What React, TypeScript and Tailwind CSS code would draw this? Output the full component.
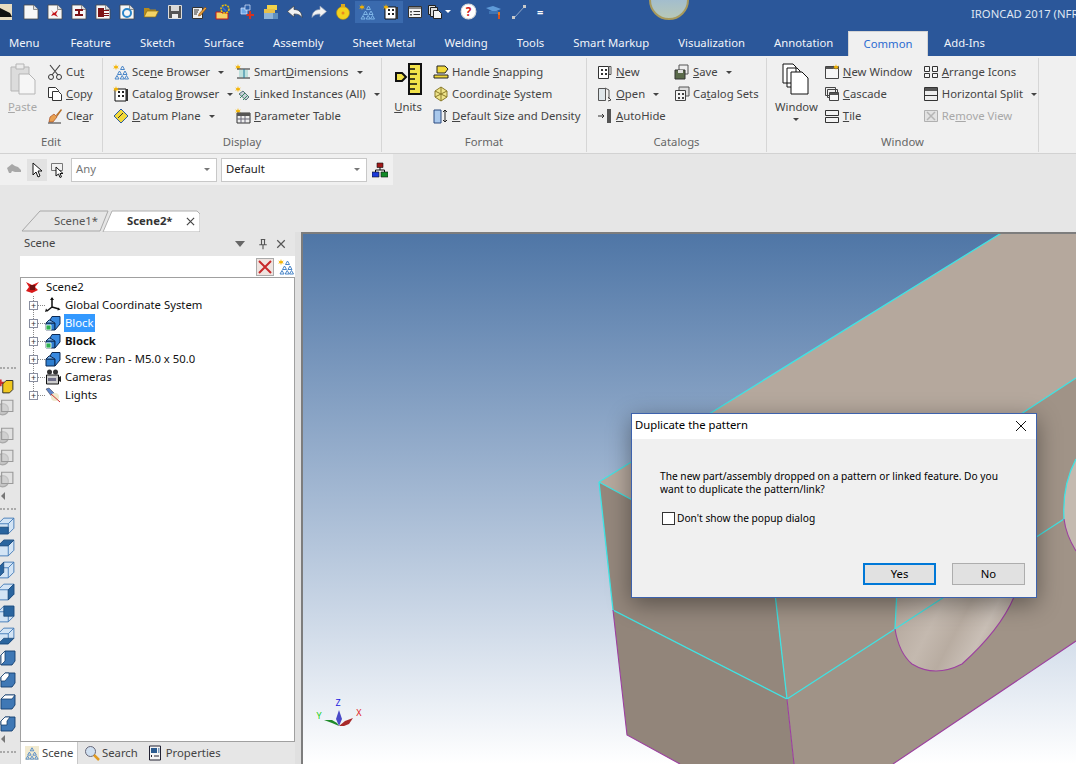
import type { ReactNode } from "react";

const Svg = ({ children, className = "w-4 h-4" }: { children: ReactNode; className?: string }) => (
    <svg viewBox="0 0 16 16" className={`${className} shrink-0 block`}>
        {children}
    </svg>
);

const Star = ({ x = 3, y = 3 }: { x?: number; y?: number }) => (
    <path
        d={`M${x} ${y - 3}l.7 2.2 2.2-.8-1.4 1.7 1.4 1.6-2.2-.7-.7 2.2-.7-2.2-2.2.7 1.4-1.6-1.4-1.7 2.2.8z`}
        fill="#f5b400"
    />
);

const Page = ({ mark }: { mark?: ReactNode }) => (
    <Svg>
        <path d="M1 1h9.500L15 5.500V15H1z" fill="#f7f7f7" stroke="#4a4a4a" strokeWidth=".8" />
        <path d="M10.500 1v4.500H15" fill="#ddd" stroke="#777" strokeWidth=".8" />
        {mark}
    </Svg>
);

const TreeIcon = ({ blue = "#4a86c8" }: { blue?: string }) => (
    <Svg>
        <Star />
        <path d="M9.500 2l2 3.500h-4zM6.500 7l2 3.500h-4zM12 7l2 3.500h-4zM4 11.500l2 3.500H2zM9.200 11.500l2 3.500h-4zM13.500 11.500l2 3.500h-4z" fill="none" stroke={blue} strokeWidth="1" />
    </Svg>
);

const CatalogIcon = () => (
    <Svg>
        <path d="M2 3h11v12H2z" fill="#fff" stroke="#111" />
        <path d="M5 5h2v2H5zM9 5h2v2H9zM5 9h2v2H5zM9 9h2v2H9z" fill="#222" />
        <path d="M13 3h2v12h-2z" fill="#333" />
        <Star />
    </Svg>
);

// wire box with one dark face, clipped by the left edge of the window
const WireCube = ({ face }: { face: string }) => (
    <Svg className="w-[18px] h-[18px] -ml-[3px]">
        <path d="M1 6l5-5h9v9l-5 5H1z" fill="#d3e4f5" stroke="#3f78b5" strokeWidth=".8" />
        <path d="M1 6h9v9M10 6l5-5" fill="none" stroke="#3f78b5" strokeWidth=".8" />
        <path d={face} fill="#2a659f" stroke="#15406f" strokeWidth=".6" />
    </Svg>
);

const SolidCube = ({ white }: { white: string }) => (
    <Svg className="w-[16px] h-[16px]">
        <path d="M1 5l4-4h10v10l-3 4H1z" fill="#3f78b5" stroke="#15406f" strokeWidth=".9" />
        <path d={white} fill="#fff" stroke="#15406f" strokeWidth=".8" />
    </Svg>
);

const GrayBox = () => (
    <Svg className="w-[18px] h-[18px] -ml-1">
        <circle cx="6" cy="10" r="5" fill="#c4c4c4" stroke="#a8a8a8" />
        <path d="M5 2h10v10H5z" fill="#dcdcdc" fillOpacity=".5" stroke="#9a9a9a" />
    </Svg>
);

const BlockIcon = ({ linked }: { linked?: boolean }) => (
    <Svg>
        <path d="M1 8h9v7H1z" fill="#2f7fd0" stroke="#0d2a55" />
        <path d="M1 8l3-3h9l-3 3z" fill="#7fb7ee" stroke="#0d2a55" />
        <path d="M5 5l2-3.500h8V9l-5 6V8z" fill="#3a8ae0" stroke="#0d2a55" />
        {linked && <path d="M1 10h5v5H1z" fill="#2fb050" stroke="#fff" strokeWidth=".8" />}
    </Svg>
);

const Caret = () => <span className="ml-[5px] inline-block border-x-[3px] border-t-[3px] border-x-transparent border-t-[#444] align-middle" />;

const Item = ({ icon, children, caret, muted }: { icon: ReactNode; children: ReactNode; caret?: boolean; muted?: boolean }) => (
    <div className={`flex h-[22px] items-center gap-[3px] whitespace-nowrap ${muted ? "text-[#a8a8a8]" : ""}`}>
        {icon}
        <span>{children}</span>
        {caret && <Caret />}
    </div>
);

const Large = ({ icon, children, caret, muted }: { icon: ReactNode; children: ReactNode; caret?: boolean; muted?: boolean }) => (
    <div className={`flex flex-col items-center ${muted ? "text-[#a8a8a8]" : ""}`}>
        <div className="flex h-[34px] items-end">{icon}</div>
        <span className="mt-[4px] leading-[16px]">{children}</span>
        {caret && <span className="mt-[3px] border-x-[3px] border-t-[3px] border-x-transparent border-t-[#444]" />}
    </div>
);

const Group = ({ label, width, className, children }: { label: string; width: string; className: string; children: ReactNode }) => (
    <div className={`${width} flex flex-col border-r border-[#d6d6d6] h-[94px] mt-[2px]`}>
        <div className={`flex h-[76px] pt-[3px] ${className}`}>{children}</div>
        <div className="text-center leading-[16px] text-[#666]">{label}</div>
    </div>
);

const qat: ReactNode[] = [
    <Page />,
    <Page mark={<path d="M4 6l3 3 4-3-2 4 2 3-4-2-3 1 2-3z" fill="#c4161c" />} />,
    <Page mark={<path d="M4 5h8v2H9v3h3v2H4v-2h3V7H4z" fill="#7d1416" />} />,
    <Page mark={<path d="M3 4h6v9H3zM9 6h5v1H9zM9 9h5v1H9zM9 11h5v1H9z" fill="#7d1416" />} />,
    <Page mark={<path d="M4 9a4 4 0 1 1 8 0 4 4 0 1 1-8 0" fill="none" stroke="#2a86c9" strokeWidth="2" />} />,
    <Svg>
        <path d="M1 4h5l1 1.500h6V13H1z" fill="#b48a1e" />
        <path d="M1 13l3-6h11.500l-3 6z" fill="#f4d466" stroke="#8a6a10" strokeWidth=".7" />
    </Svg>,
    <Svg>
        <path d="M1.500 1.500h13v13h-13z" fill="#555" stroke="#ddd" />
        <path d="M4 2h8v5H4z" fill="#d8d8d8" />
        <path d="M5 10h6v4H5z" fill="#eee" />
    </Svg>,
    <Svg>
        <path d="M1.500 3.500h10v11h-10z" fill="#eee" stroke="#333" />
        <path d="M3 6h5M3 8h4M3 10h3" stroke="#333" />
        <path d="M8 10l6-7 1.500 1.500-6 7-2 .5z" fill="#e6a03a" stroke="#7a3f10" strokeWidth=".6" />
    </Svg>,
    <Svg>
        <path d="M1 8h5l1 1h6v6H1z" fill="#f4d466" stroke="#c41a1a" />
        <circle cx="10" cy="5" r="4" fill="none" stroke="#f5c400" strokeWidth="1.500" strokeDasharray="2 1" />
        <path d="M7 3l4 4" stroke="#3a6fd0" strokeWidth="1.500" />
    </Svg>,
    <Svg>
        <path d="M2 4h6v6H2z" fill="#6fa8e8" stroke="#dfeaff" strokeWidth=".7" />
        <path d="M6 1h5v5H6z" fill="#2a5ea8" stroke="#dfeaff" strokeWidth=".7" />
        <path d="M11 7v8M7.500 11h7.500" stroke="#d8321e" strokeWidth="2" />
    </Svg>,
    <Svg>
        <path d="M4 1h10v5H4z" fill="#f2d24a" />
        <path d="M1 5h11v4H1z" fill="#e8c04a" />
        <path d="M1 9h9v6H1z" fill="#8fb4d8" />
        <path d="M10 9h5v6h-5z" fill="#5f8fc0" />
    </Svg>,
    <Svg>
        <path d="M7 2L0.500 7.500 7 13V10c3.500 0 6 .5 8 3.500 0-5-3-8-8-8z" fill="#f2f2f2" stroke="#444" strokeWidth=".7" />
    </Svg>,
    <Svg>
        <path d="M9 2l6.500 5.500L9 13V10c-3.500 0-6 .5-8 3.500 0-5 3-8 8-8z" fill="#f2f2f2" stroke="#8d9bb5" strokeWidth=".7" />
    </Svg>,
    <Svg>
        <circle cx="8" cy="9" r="6.500" fill="#f3d21e" stroke="#b08a10" strokeWidth=".6" />
        <path d="M6 0h4v3.500H6z" fill="#d9a81e" />
        <circle cx="8" cy="9" r="1.500" fill="#e88a1e" />
    </Svg>,
    <div className="-mx-1 flex h-[22px] w-6 items-center justify-center bg-[#3a6aae]">
        <TreeIcon blue="#7fb6e8" />
    </div>,
    <div className="-mx-1 flex h-[22px] w-6 items-center justify-center bg-[#3a6aae]">
        <CatalogIcon />
    </div>,
    <Svg>
        <path d="M1.500 2.500h13v11h-13z" fill="#f2f2f2" stroke="#333" />
        <path d="M2 3h12v2H2z" fill="#888" />
        <path d="M3 7h2v1.500H3zM3 10h2v1.500H3z" fill="#555" />
        <path d="M6.500 7.500H13M6.500 10.500H13" stroke="#333" />
    </Svg>,
    <div className="flex items-center">
        <Svg>
            <path d="M1.500 1.500h7v9h-7z" fill="#ddd" stroke="#222" />
            <path d="M3.500 3.500h7v9h-7z" fill="#ddd" stroke="#222" />
            <path d="M6.500 6.500h5l3 3v5h-8z" fill="#f4f4f4" stroke="#222" />
        </Svg>
        <span className="ml-[2px] border-x-[3px] border-t-[3px] border-x-transparent border-t-white" />
    </div>,
];

const qatRight: ReactNode[] = [
    <Svg className="w-[17px] h-[17px]">
        <circle cx="8" cy="8" r="7" fill="#fff" stroke="#d9d9d9" />
        <text x="8" y="12" textAnchor="middle" fontSize="11" fontWeight="700" fill="#d01a1a">
            ?
        </text>
    </Svg>,
    <Svg>
        <path d="M0 4l7-2 8 3-7 3z" fill="#5f9ad8" />
        <path d="M3 7h9v3H3z" fill="#3e74b4" />
        <path d="M12 8h2v3h-2z" fill="#e8781e" />
        <path d="M12 11h2v4h-2z" fill="#d8521e" />
    </Svg>,
    <Svg>
        <path d="M3 14L14 2" stroke="#a9bbd6" strokeWidth=".8" />
        <path d="M1 12h3v3H1zM12 1h3v3h-3z" fill="#c9c9c9" />
    </Svg>,
];

const tabs = ["Feature", "Sketch", "Surface", "Assembly", "Sheet Metal", "Welding", "Tools", "Smart Markup", "Visualization", "Annotation"];

const tree: { label: string; icon: ReactNode; cls?: string }[] = [
    {
        label: "Global Coordinate System",
        icon: (
            <Svg>
                <path d="M7 1v9M7 10l-5 4M7 10l7 2" stroke="#111" strokeWidth="1.500" fill="none" />
                <path d="M7 0l2 3H5zM0 15l1-3.500 2 2.500zM15.500 12.500l-3 1 .5-3z" fill="#111" />
            </Svg>
        ),
    },
    { label: "Block", icon: <BlockIcon linked />, cls: "bg-[#3399ff] text-white" },
    { label: "Block", icon: <BlockIcon linked />, cls: "font-bold" },
    { label: "Screw : Pan - M5.0 x 50.0", icon: <BlockIcon /> },
    {
        label: "Cameras",
        icon: (
            <Svg>
                <circle cx="4.500" cy="3" r="2.500" fill="#333" />
                <circle cx="10.500" cy="3" r="2.500" fill="#333" />
                <path d="M1.500 6h12v9h-12z" fill="#ccc" stroke="#111" />
                <path d="M3 9h8v3H3z" fill="#6f6f88" />
                <path d="M14 8l2-1v6l-2-1z" fill="#222" />
            </Svg>
        ),
    },
    {
        label: "Lights",
        icon: (
            <Svg>
                <path d="M1 2l3-1 6 6-3 3z" fill="#5f86c8" stroke="#334" strokeWidth=".5" />
                <circle cx="10" cy="10" r="4" fill="#efe9cc" />
                <path d="M6 7l9 8" stroke="#d03030" />
            </Svg>
        ),
    },
];

const Dots = ({ className = "" }: { className?: string }) => <div className={`h-[2px] w-4 shrink-0 border-t-2 border-dotted border-[#aaa] ${className}`} />;
const SmallArrow = ({ className = "" }: { className?: string }) => (
    <span className={`ml-[1px] h-0 w-0 shrink-0 border-y-[4px] border-r-[4px] border-y-transparent border-r-[#777] ${className}`} />
);
const Slot = ({ children, className = "" }: { children: ReactNode; className?: string }) => (
    <div className={`flex h-[22px] shrink-0 items-center ${className}`}>{children}</div>
);

const LeftBar = () => (
    <div className="flex w-5 shrink-0 flex-col overflow-hidden pt-[135px]">
        <Dots />
        <Slot className="mt-[5px]">
            <Svg className="w-[18px] h-[18px] -ml-1">
                <path d="M3 3h2v6H3zM1 5h6v2H1z" fill="#d03030" />
                <path d="M6 7l3-3h6v8l-3 3H6z" fill="#f0c820" stroke="#222" strokeWidth=".8" />
            </Svg>
        </Slot>
        <Slot>
            <GrayBox />
        </Slot>
        <Slot className="mt-[6px]">
            <GrayBox />
        </Slot>
        <Slot>
            <GrayBox />
        </Slot>
        <Slot>
            <GrayBox />
        </Slot>
        <SmallArrow className="mt-[2px]" />
        <Dots className="mt-[8px]" />
        <Slot className="mt-[5px]">
            <WireCube face="M1 9h9v6H1z" />
        </Slot>
        <Slot>
            <WireCube face="M1 6l5-5h9l-5 5z" />
        </Slot>
        <Slot>
            <WireCube face="M1 6l5-5v9l-5 5z" />
        </Slot>
        <Slot>
            <WireCube face="M10 6l5-5v9l-5 5z" />
        </Slot>
        <Slot>
            <WireCube face="M6 1h9v9H6z" />
        </Slot>
        <Slot>
            <WireCube face="M1 15l5-5h9l-5 5z" />
        </Slot>
        <Slot>
            <SolidCube white="M1 5l4-4v10l-4 4z" />
        </Slot>
        <Slot>
            <SolidCube white="M1 5l4-4h4v3l-4 5H1z" />
        </Slot>
        <Slot>
            <SolidCube white="M1 5l4-4h10l-3 4z" />
        </Slot>
        <Slot>
            <SolidCube white="M1 5l4-4h5l-3 4v4H1z" />
        </Slot>
        <SmallArrow />
        <Dots className="mt-[8px]" />
    </div>
);

const ScenePanel = () => (
    <div className="flex h-full w-[275px] shrink-0 flex-col">
        <div className="flex h-6 shrink-0 items-center px-1 pb-[1px] text-[#444]">
            <span>Scene</span>
            <span className="ml-auto mr-[12px] border-x-[5px] border-t-[6px] border-x-transparent border-t-[#666]" />
            <Svg className="w-3 h-3 mr-[6px]">
                <path d="M5 2h6M6 2v7M10 2v7M3 9h10M8 9v6" stroke="#555" strokeWidth="1.500" fill="none" />
            </Svg>
            <Svg className="w-3 h-3 mr-[4px]">
                <path d="M3 3l10 10M13 3L3 13" stroke="#555" strokeWidth="1.600" />
            </Svg>
        </div>
        <div className="flex h-[21px] shrink-0 items-center justify-end gap-[4px] bg-white pr-[1px]">
            <div className="flex h-[18px] w-[18px] items-center justify-center border border-[#aaa] bg-[#efe4e0]">
                <svg viewBox="0 0 16 16" className="h-4 w-4">
                    <path d="M2 2l12 12M14 2L2 14" stroke="#c8282a" strokeWidth="2" />
                </svg>
            </div>
            <TreeIcon />
        </div>
        <div className="min-h-0 flex-1 border border-[#a0a0a0] bg-white text-[#111]">
            <div className="flex h-[18px] items-center pl-1">
                <Svg>
                    <path d="M1 3l6 3 7-3-4 5 3 3-6 3-6-2 3-4z" fill="#d81a1a" />
                    <path d="M5 6h5v5H5z" fill="#701010" />
                </Svg>
                <span className="ml-[5px]">Scene2</span>
            </div>
            <div className="relative">
                <div className="absolute bottom-[9px] left-[12px] top-0 border-l border-dotted border-[#888]" />
                {tree.map((row, i) => (
                    <div key={i} className="relative flex h-[18px] items-center pl-2">
                        <span className="flex h-[9px] w-[9px] items-center justify-center border border-[#8a8fa0] bg-white text-[9px] leading-none text-[#333]">
                            +
                        </span>
                        <span className="w-[7px] border-t border-dotted border-[#888]" />
                        {row.icon}
                        <span className={`ml-[3px] px-[1px] leading-[18px] ${row.cls ?? ""}`}>{row.label}</span>
                    </div>
                ))}
            </div>
        </div>
        <div className="flex h-[22px] shrink-0 items-center text-[#444]">
            <div className="flex h-full w-[58px] items-center gap-[3px] border-x border-[#c8c8c8] bg-white pl-1">
                <Svg className="w-[14px] h-[16px]">
                    <path d="M0 0h16v16H0z" fill="#f1ead0" />
                    <path d="M8 2l2 3.500H6zM5 7l2 3.500H3zM11 7l2 3.500H9zM3 11.500l2 3.500H1zM8 11.500l2 3.500H6zM13 11.500l2 3.500h-4z" fill="none" stroke="#4a86c8" />
                </Svg>
                <span>Scene</span>
            </div>
            <div className="ml-[6px] flex items-center gap-[2px]">
                <Svg>
                    <circle cx="6.500" cy="6.500" r="5" fill="#cfdff0" stroke="#667" />
                    <path d="M10 10l5 5" stroke="#e09a20" strokeWidth="2.500" />
                </Svg>
                <span>Search</span>
            </div>
            <div className="ml-[9px] flex items-center gap-[3px]">
                <Svg>
                    <path d="M2.500 1h11v14h-11z" fill="#f4f4f4" stroke="#223" />
                    <path d="M4 3h6v5H4z" fill="#2a5a8f" />
                    <path d="M11 3h1.500v5H11z" fill="#7a9cc0" />
                    <path d="M7 11H12M5 10l-1 1 1 1" stroke="#223" fill="none" />
                </Svg>
                <span>Properties</span>
            </div>
        </div>
    </div>
);

const Viewport = () => (
    <div className="relative h-full min-w-0 flex-1 overflow-hidden border-l-2 border-t-2 border-[#7d7d7d] bg-gradient-to-b from-[#4f76a6] to-white">
        <svg viewBox="303 234 773 530" className="block h-[530px] w-[773px]">
            <defs>
                <linearGradient id="hole" x1="0" y1="0.1" x2="1" y2="0.5">
                    <stop offset="0" stopColor="#b0a398" />
                    <stop offset=".4" stopColor="#c4b9af" />
                    <stop offset=".6" stopColor="#b8aca1" />
                    <stop offset=".8" stopColor="#c9bfb6" />
                    <stop offset="1" stopColor="#b0a398" />
                </linearGradient>
            </defs>
            <path d="M599 482L1003 232H1076V378L773 576z" fill="#b5a89d" />
            <path d="M599 482L773 576 787 699 613 610z" fill="#94877c" />
            <path d="M613 610L787 699 794 764H680L627 735z" fill="#92857a" />
            <path d="M773 576L1076 378V641L893 764H794L787 699z" fill="#a09387" />
            <path d="M895 629L897 580H1014V597Q1000 630 962 664 935 678 912 664 899 653 895 629z" fill="url(#hole)" />
            <path d="M1076 459Q1062 485 1064 519 1066 535 1076 551z" fill="#c4bab0" />
            <path d="M599 482L1003 232M599 482L773 576 787 699M599 482L613 610 787 699 895 629M895 629L897 590M895 629L1064 519M773 576L1076 378M1076 459Q1062 485 1064 519" fill="none" stroke="#3fe3e3" strokeWidth="1.300" />
            <path d="M613 610L627 735 680 764M787 699L794 764M893 764L1076 641M895 629Q899 653 912 664 935 678 962 664 1000 630 1014 597M1064 519Q1066 535 1076 551" fill="none" stroke="#9c3fa0" strokeWidth="1.100" />
            <path d="M339 726l-3-7 3-9 3 9z" fill="#4a4ac8" />
            <path d="M339 726l-7-3-8-3 8 0 5 3z" fill="#1f8a2a" />
            <path d="M339 726l6-5 8-3-4 6-5 2z" fill="#a82a2a" />
            <text x="338" y="706" textAnchor="middle" fontSize="9" fill="#2020e0">Z</text>
            <text x="359" y="716" textAnchor="middle" fontSize="9" fill="#e02020">X</text>
            <text x="319" y="719" textAnchor="middle" fontSize="9" fill="#20d020">Y</text>
        </svg>

        <div className="absolute left-[328px] top-[179px] flex h-[185px] w-[406px] flex-col border border-[#3d62ad] bg-[#f0f0f0] text-black shadow-[0_6px_22px_rgba(0,0,0,0.4)]">
            <div className="flex h-[25px] shrink-0 items-center bg-white pb-[2px] pl-[3px] pr-[9px]">
                <span>Duplicate the pattern</span>
                <svg viewBox="0 0 12 12" className="ml-auto h-3 w-3">
                    <path d="M1 1l10 10M11 1L1 11" stroke="#111" strokeWidth="1" />
                </svg>
            </div>
            <div className="flex flex-1 flex-col pb-[12px] pl-[28px] pr-[11px] pt-[31px]">
                <p className="w-[350px] text-[10.2px] leading-[13px]">
                    The new part/assembly dropped on a pattern or linked feature. Do you want to duplicate the pattern/link?
                </p>
                <div className="ml-[2px] mt-[15px] flex items-center gap-[2px] text-[10.2px]">
                    <span className="h-[13px] w-[13px] border border-[#333] bg-white" />
                    <span>Don't show the popup dialog</span>
                </div>
                <div className="mt-auto flex justify-end gap-4">
                    <button className="h-[22px] w-[73px] border-2 border-[#0078d7] bg-[#e1e1e1]">Yes</button>
                    <button className="h-[22px] w-[73px] border border-[#adadad] bg-[#e1e1e1]">No</button>
                </div>
            </div>
        </div>
    </div>
);

export default function App() {
    return (
        <div className="flex h-[764px] w-[1076px] flex-col overflow-hidden bg-[#e6e6e6] font-['Noto_Sans',sans-serif] text-[11.3px] text-[#444]">
            {/* title bar */}
            <div className="relative flex h-7 shrink-0 items-center overflow-hidden bg-[#2b579a] pb-[5px]">
                <svg viewBox="0 0 12 20" className="h-[20px] w-[12px] shrink-0">
                    <path d="M0 2h12v16H0z" fill="#e9dcc0" />
                    <path d="M0 6l10 5 2 4H0z" fill="#111" />
                </svg>
                <div className="ml-[7px] flex">
                    {qat.map((icon, i) => (
                        <div key={i} className="flex h-[22px] w-6 items-center justify-center">
                            {icon}
                        </div>
                    ))}
                </div>
                <div className="ml-[5px] flex">
                    {qatRight.map((icon, i) => (
                        <div key={i} className="flex h-[22px] w-[25px] items-center justify-center">
                            {icon}
                        </div>
                    ))}
                </div>
                <span className="ml-[6px] text-[11px] font-bold leading-none text-white">=</span>
                <div className="absolute left-[649px] top-[-20px] h-10 w-10 rounded-full border-2 border-[#a89a5c] bg-gradient-to-b from-[#8fb2e0] to-[#b7c8b8]" />
                <div className="ml-auto mt-[5px] w-[105px] shrink-0 overflow-hidden whitespace-nowrap text-[#dfe6f2]">IRONCAD 2017 (NFR</div>
            </div>

            {/* ribbon tabs */}
            <div className="flex h-7 shrink-0 items-end whitespace-nowrap bg-[#2b579a] text-[#f1f4f9]">
                <div className="flex h-[25px] w-[56px] shrink-0 items-center pl-[9px]">Menu</div>
                {tabs.map((t) => (
                    <div key={t} className="flex h-[25px] shrink-0 items-center px-[14.5px]">
                        {t}
                    </div>
                ))}
                <div className="ml-auto flex shrink-0">
                    <div className="flex h-[25px] w-[80px] items-center justify-center border-x border-t border-[#d4d4d4] bg-[#f0f0f0] text-[#2b6bd0]">Common</div>
                    <div className="flex h-[25px] w-[148px] items-center pl-4">Add-Ins</div>
                </div>
            </div>

            {/* ribbon */}
            <div className="flex h-[98px] shrink-0 border-b border-[#d2d2d2] bg-[#f0f0f0]">
                <Group label="Edit" width="w-[103px]" className="pl-2">
                    <Large
                        muted
                        icon={
                            <svg viewBox="0 0 26 32" className="h-8 w-[26px]">
                                <path d="M1 4h18v24H1z" fill="#dcdcdc" stroke="#b5b5b5" />
                                <path d="M6 1h8v5H6z" fill="#ececec" stroke="#b5b5b5" />
                                <path d="M9 11h10l6 6v14H9z" fill="#f6f6f6" stroke="#b5b5b5" />
                            </svg>
                        }
                    >
                        <u>P</u>aste
                    </Large>
                    <div className="ml-[10px]">
                        <Item icon={<Svg><path d="M3 1l8 10M13 1L5 11" stroke="#444" strokeWidth="1.200" /><circle cx="4" cy="13" r="2.500" fill="none" stroke="#333" /><circle cx="12" cy="13" r="2.500" fill="none" stroke="#333" /></Svg>}>Cu<u>t</u></Item>
                        <Item icon={<Svg><path d="M1.500 1.500h7l3 3v7h-10z" fill="#fff" stroke="#333" /><path d="M5.500 5.500h6l3 3v6h-9z" fill="#fff" stroke="#333" /></Svg>}><u>C</u>opy</Item>
                        <Item icon={<Svg><path d="M9 7l5-6 1 1-5 7z" fill="#b5702a" /><path d="M3 9l4-3 3 3-4 5H2z" fill="#e8a050" stroke="#a03a10" strokeWidth=".6" /><path d="M1 15h13" stroke="#333" /></Svg>}>Cle<u>a</u>r</Item>
                    </div>
                </Group>
                <Group label="Display" width="w-[279px]" className="pl-[10px]">
                    <div className="w-[122px]">
                        <Item caret icon={<TreeIcon />}>Sce<u>n</u>e Browser</Item>
                        <Item caret icon={<CatalogIcon />}>Catalog <u>B</u>rowser</Item>
                        <Item caret icon={<Svg><path d="M8 1l7 7-7 7-7-7z" fill="#f2d93a" stroke="#2a5aa0" /><path d="M5 10l5-5" stroke="#333" /></Svg>}><u>D</u>atum Plane</Item>
                    </div>
                    <div>
                        <Item caret icon={<Svg><Star /><path d="M2 14h13M2 5h13" stroke="#222" /><path d="M4 6h9v7H4z" fill="#bfe0dc" /><path d="M9 5v9" stroke="#1b7a9c" /></Svg>}>Smart<u>D</u>imensions</Item>
                        <Item caret icon={<Svg><Star /><path d="M4 8l4-3 6 6-3 3z" fill="#c8d0d8" stroke="#3a5a60" strokeWidth=".8" /><path d="M5 12l5-5M8 14l5-5" stroke="#3a8a60" /></Svg>}><u>L</u>inked Instances (All)</Item>
                        <Item icon={<Svg><Star /><path d="M2 5h13v10H2z" fill="#eee" stroke="#333" /><path d="M2 5h13v3H2z" fill="#555" /><path d="M6 8v7M10 8v7M2 11h13" stroke="#667" /></Svg>}><u>P</u>arameter Table</Item>
                    </div>
                </Group>
                <Group label="Format" width="w-[205px]" className="pl-[12px]">
                    <Large
                        icon={
                            <svg viewBox="0 0 28 32" className="h-8 w-7">
                                <path d="M15 1h12v30H15z" fill="#f2e24a" stroke="#111" strokeWidth="2" />
                                <path d="M15 6h6M15 11h8M15 16h6M15 21h8M15 26h6" stroke="#111" strokeWidth="1.500" />
                                <path d="M2 10h6l4 4-4 4H2z" fill="#f2e24a" stroke="#111" strokeWidth="2" />
                            </svg>
                        }
                    >
                        <u>U</u>nits
                    </Large>
                    <div className="ml-[11px]">
                        <Item icon={<Svg><path d="M4 2h8l3 3-3 4H4z" fill="#f2d93a" stroke="#222" /><path d="M1 11h14v3H1z" fill="#f2d93a" stroke="#222" /></Svg>}>Handle <u>S</u>napping</Item>
                        <Item icon={<Svg><path d="M8 1l6 4v6l-6 4-6-4V5z" fill="#efe48a" stroke="#8a7a2a" /><path d="M2 5l12 6M14 5L2 11M8 1v14" stroke="#8a7a2a" /></Svg>}>Coordina<u>t</u>e System</Item>
                        <Item icon={<Svg><path d="M1 2h7v13H1z" fill="#a9c8ec" stroke="#2a4a80" /><path d="M12 2v12M10 4l2-2 2 2M10 12l2 2 2-2" fill="none" stroke="#222" /></Svg>}><u>D</u>efault Size and Density</Item>
                    </div>
                </Group>
                <Group label="Catalogs" width="w-[180px]" className="pl-[10px]">
                    <div className="w-[77px]">
                        <Item icon={<Svg><path d="M1.500 2.500h10v12h-10z" fill="#fff" stroke="#333" /><path d="M4 5h2v2H4zM8 5h2v2H8zM4 9h2v2H4zM8 9h2v2H8z" fill="#333" /><path d="M12 2.500h2v8h-2z" fill="#fff" stroke="#555" /></Svg>}><u>N</u>ew</Item>
                        <Item caret icon={<Svg><path d="M1.500 2.500h7v12h-7z" fill="#dfe6ea" stroke="#555" /><path d="M8 2l4 2v9" fill="none" stroke="#555" /><path d="M11 11l3 3-3 1" fill="none" stroke="#444" /></Svg>}><u>O</u>pen</Item>
                        <Item icon={<Svg><path d="M1 8h6M5 6l2 2-2 2" stroke="#333" fill="none" /><path d="M10 1h4v14h-4z" fill="#555" /></Svg>}><u>A</u>utoHide</Item>
                    </div>
                    <div>
                        <Item caret icon={<Svg><path d="M5 1h9v9H5z" fill="#eee" stroke="#555" /><path d="M1 6h10v9H1z" fill="#5a6a4a" stroke="#333" /><path d="M4 6h5v3H4z" fill="#ddd" /></Svg>}><u>S</u>ave</Item>
                        <Item icon={<Svg><path d="M5 1h10v9H5z" fill="#ddd" stroke="#555" /><path d="M1.500 4.500h10v10h-10z" fill="#f4f4f4" stroke="#444" /><path d="M4 7h2v2H4zM8 7h2v2H8zM4 11h2v2H4zM8 11h2v2H8z" fill="#444" /></Svg>}>Ca<u>t</u>alog Sets</Item>
                    </div>
                </Group>
                <Group label="Window" width="w-[272px]" className="pl-2">
                    <Large
                        caret
                        icon={
                            <svg viewBox="0 0 28 32" className="h-8 w-7">
                                <path d="M1 1h10l3 3v16H1zM5 5h10l3 3v16H5z" fill="#fff" stroke="#111" />
                                <path d="M9 9h11l6 6v16H9z" fill="#fff" stroke="#111" />
                            </svg>
                        }
                    >
                        Window
                    </Large>
                    <div className="ml-[6px] w-[99px]">
                        <Item icon={<Svg><path d="M1.500 2.500h13v12h-13z" fill="#f6f6f6" stroke="#444" /><path d="M2 3h12v2H2z" fill="#555" /><Star x={12} y={3} /></Svg>}><u>N</u>ew Window</Item>
                        <Item icon={<Svg><path d="M1.500 1.500h10v8h-10zM3.500 3.500h10v8h-10z" fill="#eee" stroke="#444" /><path d="M5.500 6.500h9v8h-9z" fill="#f8f8f8" stroke="#444" /><path d="M6 7h8v2H6z" fill="#555" /></Svg>}><u>C</u>ascade</Item>
                        <Item icon={<Svg><path d="M1.500 2.500h13v5h-13zM1.500 9.500h13v5h-13z" fill="#f4f4f4" stroke="#333" /></Svg>}><u>T</u>ile</Item>
                    </div>
                    <div>
                        <Item icon={<Svg><path d="M1.500 2.500h5v5h-5zM9.500 2.500h5v5h-5zM1.500 9.500h5v4h-5zM9.500 9.500h5v4h-5z" fill="#f4f4f4" stroke="#333" /></Svg>}><u>A</u>rrange Icons</Item>
                        <Item caret icon={<Svg><path d="M1.500 1.500h13v13h-13z" fill="#eee" stroke="#333" /><path d="M2 2h12v3H2z" fill="#555" /><path d="M2 9.500h12" stroke="#333" /></Svg>}>Horizontal Split</Item>
                        <Item muted icon={<Svg><path d="M1.500 2.500h13v11h-13z" fill="#e2e2e2" stroke="#b0b0b0" /><path d="M4 4l8 8M12 4l-8 8" stroke="#b5b5b5" strokeWidth="1.500" /></Svg>}>Re<u>m</u>ove View</Item>
                    </div>
                </Group>
            </div>

            {/* filter toolbar */}
            <div className="flex h-[31px] w-[393px] shrink-0 items-center bg-[#f0f0f0] pl-[6px]">
                <Svg>
                    <path d="M1 6l5-4 3 2 3 1 3 3v2H9l-3-1-1 2H3z" fill="#a8a8a8" />
                </Svg>
                <div className="ml-[5px] flex h-[22px] w-[20px] items-center justify-center bg-[#e2e2e2]">
                    <svg viewBox="0 0 12 16" className="h-4 w-3">
                        <path d="M2 1v12l3-3 2 5 2-1-2-5h4z" fill="#fff" stroke="#111" />
                    </svg>
                </div>
                <div className="ml-[3px]">
                    <Svg>
                        <path d="M1.500 1.500h11v7h-11z" fill="none" stroke="#777" />
                        <path d="M6 5v9l2.500-2 1.500 3.500 1.500-.7-1.500-3.300h3z" fill="#fff" stroke="#111" />
                    </Svg>
                </div>
                <div className="ml-[5px] flex h-6 w-[146px] items-center justify-between border border-[#c8c8c8] bg-white pl-1 pr-[6px] text-[#777]">
                    Any
                    <span className="border-x-[3px] border-t-[3px] border-x-transparent border-t-[#777]" />
                </div>
                <div className="ml-1 flex h-6 w-[146px] items-center justify-between border border-[#c8c8c8] bg-white pl-1 pr-[6px] text-[#222]">
                    Default
                    <span className="border-x-[3px] border-t-[3px] border-x-transparent border-t-[#777]" />
                </div>
                <div className="ml-[5px]">
                    <Svg>
                        <path d="M8 5v3M3.500 11V8h9v3" stroke="#111" fill="none" />
                        <path d="M5 1h6v4.500H5z" fill="#a01818" stroke="#111" strokeWidth=".6" />
                        <path d="M0 10h7v5H0z" fill="#1a3ad8" stroke="#111" strokeWidth=".6" />
                        <path d="M9 10h7v5H9z" fill="#128a28" stroke="#111" strokeWidth=".6" />
                    </Svg>
                </div>
            </div>

            {/* document tabs */}
            <div className="relative flex h-[47px] shrink-0 items-end pb-[1px] pl-[54px]">
                <svg viewBox="0 0 200 22" className="absolute bottom-0 left-0 h-[22px] w-[200px]">
                    <path d="M22 21L40 1H108L100 21z" fill="#e6e6e6" stroke="#a8a8a8" />
                    <path d="M103 22L112 1H197l3 3V22z" fill="#fff" stroke="#b0b0b0" />
                </svg>
                <span className="relative w-[73px] leading-[20px] text-[#555]">Scene1*</span>
                <span className="relative w-[59px] font-bold leading-[20px] text-[#333]">Scene2*</span>
                <svg viewBox="0 0 10 10" className="relative mb-[5px] h-[9px] w-[9px]">
                    <path d="M1 1l8 8M9 1L1 9" stroke="#444" strokeWidth="1.300" />
                </svg>
            </div>

            {/* workspace */}
            <div className="flex min-h-0 flex-1">
                <LeftBar />
                <ScenePanel />
                <div className="w-[6px] shrink-0 bg-[#e0e0e0]" />
                <Viewport />
            </div>
        </div>
    );
}
